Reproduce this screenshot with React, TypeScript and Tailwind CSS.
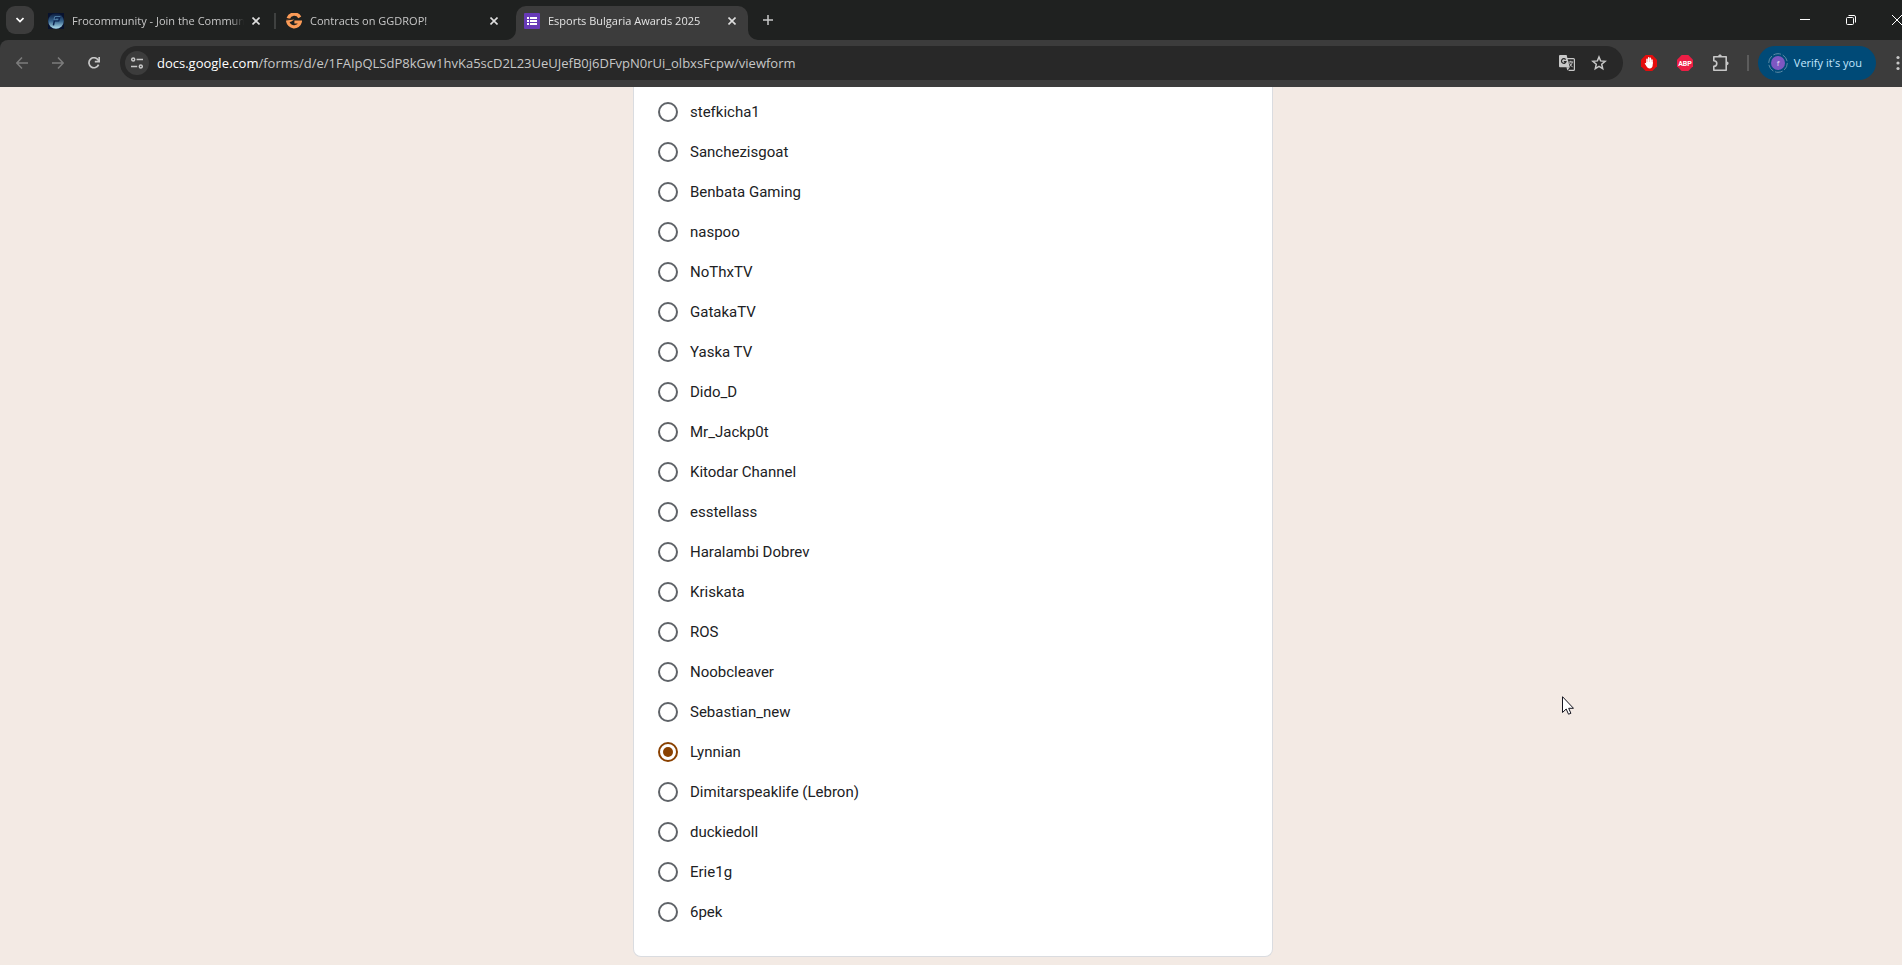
import { useState } from "react";
import type { ReactNode } from "react";

const options = [
  "stefkicha1",
  "Sanchezisgoat",
  "Benbata Gaming",
  "naspoo",
  "NoThxTV",
  "GatakaTV",
  "Yaska TV",
  "Dido_D",
  "Mr_Jackp0t",
  "Kitodar Channel",
  "esstellass",
  "Haralambi Dobrev",
  "Kriskata",
  "ROS",
  "Noobcleaver",
  "Sebastian_new",
  "Lynnian",
  "Dimitarspeaklife (Lebron)",
  "duckiedoll",
  "Erie1g",
  "6pek",
];

function CloseGlyph() {
  return (
    <svg viewBox="0 0 8 8" className="size-2" fill="none" stroke="currentColor" strokeWidth="1.6">
      <path d="M0.5 0.5 7.5 7.5M7.5 0.5 0.5 7.5" />
    </svg>
  );
}

function FroIcon() {
  return (
    <svg viewBox="0 0 16 16" className="size-4 shrink-0">
      <defs>
        <linearGradient id="fro" x1="0" y1="0" x2="0" y2="1">
          <stop offset="0" stopColor="#0a1a3c" />
          <stop offset="0.5" stopColor="#34618a" />
          <stop offset="1" stopColor="#b4e4f2" />
        </linearGradient>
      </defs>
      <rect width="16" height="16" fill="#08122e" />
      <circle cx="8" cy="8" r="7.8" fill="url(#fro)" />
      <path d="M12.4 4.2H7.2L5.4 12.4M6.6 7.8h4l1-3" fill="none" stroke="#0b2350" strokeWidth="1.5" />
      <path d="M12.4 3.6H6.8L6 6.8h4.4" fill="none" stroke="#6fa3c8" strokeWidth="0.7" />
    </svg>
  );
}

function GgIcon() {
  return (
    <svg viewBox="0 0 16 16" className="size-4 shrink-0" fill="none">
      <path d="M13.8 4.4A6.4 6.4 0 0 0 2.2 5.4" stroke="#fb9b57" strokeWidth="3.4" />
      <path d="M1.8 8A6.3 6.3 0 0 0 14.2 9H8.4" stroke="#fb9b57" strokeWidth="3.2" />
      <path d="M0 7.6 8.4 6.4 5 8.8 0.6 9.6Z" fill="#fb9b57" />
      <path d="M0.4 6.6 4.6 5.6" stroke="#6b3f22" strokeWidth="0.9" />
    </svg>
  );
}

function FormsIcon() {
  return (
    <svg viewBox="0 0 16 16" className="size-4 shrink-0">
      <rect width="16" height="16" rx="1" fill="#673ab7" />
      <path
        fill="#fff"
        d="M3 4h2v2H3zM6 4h7v2H6zM3 7h2v2H3zM6 7h7v2H6zM3 10h2v2H3zM6 10h7v2H6z"
      />
    </svg>
  );
}

function Tab({ icon, title, active = false }: { icon: ReactNode; title: string; active?: boolean }) {
  return (
    <div
      className={
        active
          ? "relative flex h-[34px] w-[232px] items-center rounded-t-[10px] bg-[#3c3c3c] px-2 pb-1 text-[#e3e3e3]"
          : "flex h-[34px] w-[232px] items-center px-2 pb-1 text-[#c7c7c7]"
      }
    >
      {active && (
        <>
          <svg viewBox="0 0 10 10" className="absolute bottom-0 -left-[10px] size-[10px]">
            <path d="M10 0v10H0A10 10 0 0 0 10 0Z" fill="#3c3c3c" />
          </svg>
          <svg viewBox="0 0 10 10" className="absolute -right-[10px] bottom-0 size-[10px]">
            <path d="M0 0v10h10A10 10 0 0 1 0 0Z" fill="#3c3c3c" />
          </svg>
        </>
      )}
      {icon}
      <a
        href="#"
        className="ml-2 min-w-0 flex-1 overflow-hidden text-[11px] leading-4 whitespace-nowrap [mask-image:linear-gradient(to_right,#000_92%,transparent)]"
      >
        {title}
      </a>
      <button type="button" aria-label="Close tab" className="ml-1 grid size-4 place-items-center text-[#dedede]">
        <CloseGlyph />
      </button>
    </div>
  );
}

function TabStrip() {
  return (
    <div className="-mr-[18px] flex h-10 items-end">
      <button
        type="button"
        aria-label="Search tabs"
        className="mr-1.5 mb-1.5 ml-1.5 grid size-7 place-items-center rounded-[9px] bg-[#3c3c3c] text-white"
      >
        <svg viewBox="0 0 8 6" className="h-1.5 w-2" fill="none" stroke="currentColor" strokeWidth="1.7">
          <path d="M0.5 1 4 4.5 7.5 1" />
        </svg>
      </button>
      <Tab icon={<FroIcon />} title="Frocommunity - Join the Community" />
      <div className="flex h-[34px] w-1.5 items-center justify-center pb-1">
        <span className="h-4 w-0.5 bg-[#3f4140]" />
      </div>
      <Tab icon={<GgIcon />} title="Contracts on GGDROP!" />
      <div className="w-1.5" />
      <Tab icon={<FormsIcon />} title="Esports Bulgaria Awards 2025" active />
      <button
        type="button"
        aria-label="New tab"
        className="mb-1.5 ml-1.5 grid size-7 place-items-center text-[#c7c7c7]"
      >
        <svg viewBox="0 0 10 10" className="size-2.5" fill="none" stroke="currentColor" strokeWidth="1.5">
          <path d="M5 0v10M0 5h10" />
        </svg>
      </button>
      <div className="ml-auto flex h-10 text-white">
        <button type="button" aria-label="Minimize" className="grid w-[46px] place-items-center">
          <svg viewBox="0 0 10 10" className="size-2.5" stroke="currentColor">
            <path d="M0 4.5h10" />
          </svg>
        </button>
        <button type="button" aria-label="Restore" className="grid w-[46px] place-items-center">
          <svg viewBox="0 0 10 10" className="size-2.5" fill="none" stroke="currentColor">
            <rect x="0.5" y="2.5" width="7" height="7" rx="1" />
            <path d="M2.5 0.5H8A1.5 1.5 0 0 1 9.5 2v5.5" />
          </svg>
        </button>
        <button type="button" aria-label="Close" className="grid w-[46px] place-items-center">
          <svg viewBox="0 0 10 10" className="size-2.5" stroke="currentColor">
            <path d="M0 0l10 10M10 0L0 10" />
          </svg>
        </button>
      </div>
    </div>
  );
}

function ToolButton({ label, className, children }: { label: string; className: string; children: ReactNode }) {
  return (
    <button type="button" aria-label={label} className={`grid shrink-0 place-items-center ${className}`}>
      {children}
    </button>
  );
}

function Toolbar() {
  return (
    <div className="-mr-[18px] flex h-[47px] items-center rounded-tl-lg bg-[#3c3c3c] pr-[5px] pb-px pl-1 text-[#c7c7c7]">
      <ToolButton label="Back" className="size-9 text-[#7c7c7c]">
        <svg viewBox="0 0 12 12" className="size-3" fill="none" stroke="currentColor" strokeWidth="1.5">
          <path d="M12 6H1M6 0.6 0.8 6 6 11.4" />
        </svg>
      </ToolButton>
      <ToolButton label="Forward" className="size-9 text-[#7c7c7c]">
        <svg viewBox="0 0 12 12" className="size-3" fill="none" stroke="currentColor" strokeWidth="1.5">
          <path d="M0 6h11M6 0.6 11.2 6 6 11.4" />
        </svg>
      </ToolButton>
      <ToolButton label="Reload" className="size-9">
        <svg viewBox="0 0 12 12" className="size-3" fill="none" stroke="currentColor" strokeWidth="1.7">
          <path d="M10.6 7.6A5 5 0 1 1 10 2.8L11 4.2" />
          <path d="M11.2 0v4.6H6.8" />
        </svg>
      </ToolButton>
      <div className="ml-2 flex h-[34px] min-w-0 flex-1 items-center rounded-full bg-[#282828] pr-2 pl-[5px]">
        <ToolButton label="View site information" className="size-6 rounded-full bg-[#3c3c3c]">
          <svg viewBox="0 0 12 12" className="size-3" fill="none" stroke="currentColor" strokeWidth="1.5">
            <circle cx="2.2" cy="2.5" r="1.5" />
            <path d="M5.6 2.5H12M0 9.5h6.2" />
            <circle cx="9.8" cy="9.5" r="1.5" />
          </svg>
        </ToolButton>
        <a href="#" className="ml-2 min-w-0 flex-1 truncate text-[13px] leading-5 text-[#c7c7c7]">
          <span className="text-white">docs.google.com</span>
          /forms/d/e/1FAIpQLSdP8kGw1hvKa5scD2L23UeUJefB0j6DFvpN0rUi_olbxsFcpw/viewform
        </a>
        <ToolButton label="Translate this page" className="size-8">
          <svg viewBox="0 0 16 16" className="size-4">
            <path d="M8 3.6h6.4a1 1 0 0 1 1 1v9.800a1 1 0 0 1-1 1H9.600" fill="none" stroke="#c7c7c7" strokeWidth="1.200" />
            <path d="M1 0h6.600l3.200 12.200H1a1 1 0 0 1-1-1V1a1 1 0 0 1 1-1Z" fill="#c7c7c7" />
            <path d="M6.600 4.600A2.300 2.300 0 1 0 7 6.600H4.800" fill="none" stroke="#282828" strokeWidth="1.200" />
            <path d="M7.400 12.200 8.400 15.600 10.800 12.200Z" fill="#c7c7c7" />
            <path
              d="M9.600 7h4.600M11.800 5.800V7M13.200 7.200c-.4 2-1.200 3.200-2.400 4.200M10.600 8.200c.7 1.600 1.700 2.900 3 4"
              fill="none"
              stroke="#c7c7c7"
            />
          </svg>
        </ToolButton>
        <ToolButton label="Bookmark this tab" className="size-8">
          <svg viewBox="0 0 16 16" className="size-4" fill="none" stroke="currentColor" strokeWidth="1.500">
            <path d="M8 2 9.600 5.900l4.500.4-3.400 2.900 1 4.400L8 11.300l-3.700 2.300 1-4.400L1.900 6.300l4.500-.4Z" />
          </svg>
        </ToolButton>
      </div>
      <div className="ml-2 flex items-center">
        <ToolButton label="AdBlock" className="size-9">
          <svg viewBox="0 0 16 16" className="size-4">
            <path d="M4.700 0h6.600L16 4.700v6.600L11.300 16H4.700L0 11.300V4.700Z" fill="#e40d0d" />
            <path
              d="M6 8V4.200M7.700 8V2.700M9.400 8V3.300M11 8.500V5"
              stroke="#fff"
              strokeWidth="1.500"
              strokeLinecap="round"
            />
            <path
              d="M5.300 7h6.400v3c0 2.200-1.200 3.500-3 3.500-1.600 0-2.600-1-3.400-2.400L3.700 8.400c.5-.6 1.100-.4 1.600.2Z"
              fill="#fff"
            />
          </svg>
        </ToolButton>
        <ToolButton label="Adblock Plus" className="size-9">
          <svg viewBox="0 0 16 16" className="size-4">
            <path d="M4.700 0h6.600L16 4.700v6.600L11.300 16H4.700L0 11.300V4.700Z" fill="#ed1e45" />
            <text
              x="8"
              y="10.700"
              textAnchor="middle"
              fill="#fff"
              fontFamily="Roboto, sans-serif"
              fontWeight="700"
              fontSize="7"
            >
              ABP
            </text>
          </svg>
        </ToolButton>
        <ToolButton label="Extensions" className="size-9">
          <svg viewBox="0 0 18 18" className="size-[18px]" fill="none" stroke="currentColor" strokeWidth="1.600">
            <path
              d="M1.800 2.800h12.400v13.400H1.800v-3.800c2.200 0 3-1.300 3-2.800s-.8-2.800-3-2.800Z"
              strokeLinejoin="round"
            />
            <path d="M6.200 2.400C6.200 0 9.800 0 9.800 2.400ZM14.800 7.600c2.400 0 2.400 3.600 0 3.600Z" fill="currentColor" stroke="none" />
          </svg>
        </ToolButton>
        <span className="mx-2 h-4 w-0.5 bg-[#5c5c5c]" />
        <button
          type="button"
          className="ml-px flex h-[34px] items-center rounded-full bg-[#004a77] pr-3.5 pl-2.5 text-[#c2e7ff]"
        >
          <svg viewBox="0 0 20 20" className="size-5">
            <circle cx="10" cy="10" r="9.300" fill="none" stroke="#5c8ba6" strokeWidth="1" strokeDasharray="7.700 2" />
            <circle cx="10" cy="10" r="7" fill="#7e57c2" />
            <text x="10" y="13" textAnchor="middle" fill="#e6dcf5" fontFamily="Open Sans, sans-serif" fontSize="8">
              f
            </text>
          </svg>
          <span className="ml-1.5 text-[11px] leading-4 whitespace-nowrap">Verify it's you</span>
        </button>
        <ToolButton label="Menu" className="ml-[5px] h-[34px] w-[34px]">
          <svg viewBox="0 0 4 16" className="h-4 w-1" fill="currentColor">
            <circle cx="2" cy="2.500" r="1.600" />
            <circle cx="2" cy="8" r="1.600" />
            <circle cx="2" cy="13.500" r="1.600" />
          </svg>
        </ToolButton>
      </div>
    </div>
  );
}

export default function App() {
  const [choice, setChoice] = useState("Lynnian");

  return (
    <div className="relative min-h-screen overflow-hidden bg-[#f3eae4]">
      <header className="bg-[#1f2120] font-['Open_Sans',sans-serif]">
        <TabStrip />
        <Toolbar />
      </header>
      <main className="pb-2 pl-1">
        <form className="mx-auto w-full max-w-[640px] rounded-b-lg border border-t-0 border-[#dadce0] bg-white px-6 pt-[5px] pb-6">
          <div role="radiogroup" aria-label="Nominee">
            {options.map((name) => (
              <label
                key={name}
                className="flex h-10 items-center gap-3 font-[Roboto,sans-serif] text-[15px] leading-5 text-[#202124]"
              >
                <input
                  type="radio"
                  name="nominee"
                  value={name}
                  checked={choice === name}
                  onChange={() => setChoice(name)}
                  className="grid size-5 appearance-none place-content-center rounded-full border-2 border-[#5f6368] checked:border-[#8a4100] checked:before:size-2.5 checked:before:rounded-full checked:before:bg-[#8a4100] checked:before:content-['']"
                />
                {name}
              </label>
            ))}
          </div>
        </form>
      </main>
      <svg viewBox="0 0 12 19" className="pointer-events-none absolute top-[696px] left-[1562px] h-[19px] w-3">
        <path
          d="M0.500 0.700V16.500L4.200 13l2.300 5.200 2.400-.9L6.700 12.300h4.800Z"
          fill="#fff"
          stroke="#15151f"
          strokeWidth="1"
        />
      </svg>
    </div>
  );
}
